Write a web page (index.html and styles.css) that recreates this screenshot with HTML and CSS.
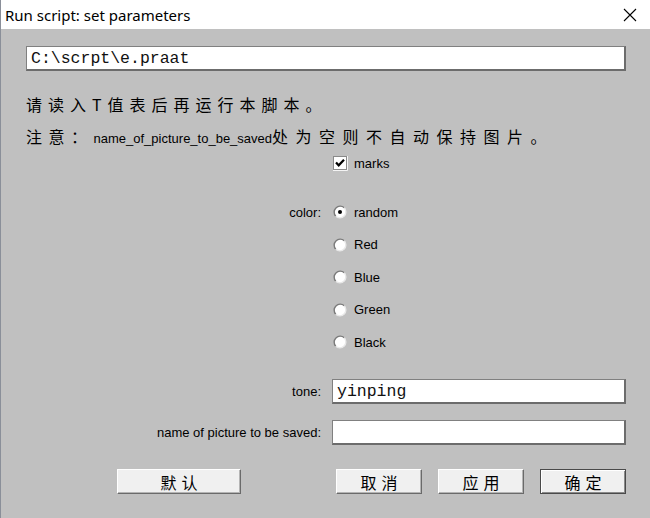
FILE: index.html
```html
<!DOCTYPE html>
<html lang="zh">
<head>
    <meta charset="UTF-8">
    <title>Run script: set parameters</title>
    <link rel="stylesheet" href="styles.css">
</head>
<body>
    <div class="titlebar">
        <span class="title">Run script: set parameters</span>
        <svg class="close" width="14" height="14" viewBox="0 0 14 14">
            <path d="M1 1 L13 13 M13 1 L1 13" stroke="#000" stroke-width="1.1" fill="none"/>
        </svg>
    </div>

    <div class="dialog">
        <input class="field path" type="text" value="C:\scrpt\e.praat">

        <p class="note">请读入T值表后再运行本脚本。</p>
        <p class="note note-wide">注意：<span class="latin">name_of_picture_to_be_saved</span><span class="tail">处为空则不自动保持图片。</span></p>

        <div class="row check-row">
            <span class="label"></span>
            <label class="option">
                <svg width="16" height="16" viewBox="0 0 16 16">
                    <rect x="1.5" y="1.5" width="13" height="13" fill="#fff" stroke="#8a8a8a"/>
                    <path d="M15.5 1 V15.5 H1" stroke="#f4f4f4" fill="none"/>
                    <path d="M4 7.5 L6.7 10.3 L12 4.8" stroke="#000" stroke-width="2.2" fill="none"/>
                </svg>
                marks
            </label>
        </div>

        <div class="radios">
            <div class="row radio-row">
                <span class="label">color:</span>
                <label class="option">
                    <svg width="16" height="16" viewBox="0 0 16 16">
                        <circle cx="8" cy="8" r="6" fill="#fff"/>
                        <path d="M3.76 12.24 A6 6 0 0 1 12.24 3.76" stroke="#7a7a7a" stroke-width="1.4" fill="none"/>
                        <path d="M12.24 3.76 A6 6 0 0 1 3.76 12.24" stroke="#e8e8e8" stroke-width="1.4" fill="none"/>
                        <circle cx="8" cy="8" r="2" fill="#000"/>
                    </svg>
                    random
                </label>
            </div>
            <div class="row radio-row">
                <span class="label"></span>
                <label class="option">
                    <svg width="16" height="16" viewBox="0 0 16 16">
                        <circle cx="8" cy="8" r="6" fill="#fff"/>
                        <path d="M3.76 12.24 A6 6 0 0 1 12.24 3.76" stroke="#7a7a7a" stroke-width="1.4" fill="none"/>
                        <path d="M12.24 3.76 A6 6 0 0 1 3.76 12.24" stroke="#e8e8e8" stroke-width="1.4" fill="none"/>
                    </svg>
                    Red
                </label>
            </div>
            <div class="row radio-row">
                <span class="label"></span>
                <label class="option">
                    <svg width="16" height="16" viewBox="0 0 16 16">
                        <circle cx="8" cy="8" r="6" fill="#fff"/>
                        <path d="M3.76 12.24 A6 6 0 0 1 12.24 3.76" stroke="#7a7a7a" stroke-width="1.4" fill="none"/>
                        <path d="M12.24 3.76 A6 6 0 0 1 3.76 12.24" stroke="#e8e8e8" stroke-width="1.4" fill="none"/>
                    </svg>
                    Blue
                </label>
            </div>
            <div class="row radio-row">
                <span class="label"></span>
                <label class="option">
                    <svg width="16" height="16" viewBox="0 0 16 16">
                        <circle cx="8" cy="8" r="6" fill="#fff"/>
                        <path d="M3.76 12.24 A6 6 0 0 1 12.24 3.76" stroke="#7a7a7a" stroke-width="1.4" fill="none"/>
                        <path d="M12.24 3.76 A6 6 0 0 1 3.76 12.24" stroke="#e8e8e8" stroke-width="1.4" fill="none"/>
                    </svg>
                    Green
                </label>
            </div>
            <div class="row radio-row">
                <span class="label"></span>
                <label class="option">
                    <svg width="16" height="16" viewBox="0 0 16 16">
                        <circle cx="8" cy="8" r="6" fill="#fff"/>
                        <path d="M3.76 12.24 A6 6 0 0 1 12.24 3.76" stroke="#7a7a7a" stroke-width="1.4" fill="none"/>
                        <path d="M12.24 3.76 A6 6 0 0 1 3.76 12.24" stroke="#e8e8e8" stroke-width="1.4" fill="none"/>
                    </svg>
                    Black
                </label>
            </div>
        </div>

        <div class="row text-row tone-row">
            <span class="label">tone:</span>
            <input class="field" type="text" value="yinping">
        </div>
        <div class="row text-row name-row">
            <span class="label">name of picture to be saved:</span>
            <input class="field" type="text" value="">
        </div>

        <div class="buttons">
            <button class="btn wide">默认</button>
            <button class="btn push">取消</button>
            <button class="btn">应用</button>
            <button class="btn default">确定</button>
        </div>
    </div>
</body>
</html>
```

FILE: styles.css
```css
html, body {
    margin: 0;
    height: 100%;
}
body {
    background: #c0c0c0;
    font-family: 'Liberation Sans', Arial, sans-serif;
    font-size: 13px;
    color: #000;
    border-left: 1px solid #8a8f99;
    box-sizing: border-box;
}
.titlebar {
    height: 29px;
    background: #fff;
    display: flex;
    align-items: center;
    padding: 0 13px 0 4px;
}
.title {
    font-family: 'Noto Sans', 'Liberation Sans', sans-serif;
    font-size: 15px;
    flex: 1;
}
.close {
    display: block;
}
.dialog {
    padding: 17px 24px 0 25px;
}
.field {
    display: block;
    box-sizing: border-box;
    width: 100%;
    height: 25px;
    margin: 0;
    padding: 0 4px;
    background: #fff;
    border: 1px solid #808080;
    border-right: 2px solid #6c6c6c;
    border-bottom: 2px solid #6c6c6c;
    font-family: 'Liberation Mono', 'Courier New', monospace;
    font-size: 16.5px;
    color: #111;
    outline: none;
}
.note {
    margin: 0;
    height: 32px;
    line-height: 32px;
    font-family: 'Noto Sans CJK SC', sans-serif;
    font-size: 16px;
    letter-spacing: 6px;
    white-space: nowrap;
}
.note-wide {
    letter-spacing: 6.5px;
}
.path + .note {
    margin-top: 17px;
}
.latin {
    font-family: 'Liberation Sans', Arial, sans-serif;
    font-size: 13px;
    letter-spacing: 0;
}
.tail {
    letter-spacing: 7.5px;
}
.row {
    display: grid;
    grid-template-columns: 295px 1fr;
    column-gap: 11px;
    align-items: center;
}
.label {
    text-align: right;
}
.option {
    display: flex;
    align-items: center;
    gap: 6px;
}
.option svg {
    display: block;
}
.check-row {
    height: 22px;
    margin-bottom: 22px;
}
.radio-row {
    height: 32.5px;
}
.text-row {
    height: 25px;
}
.tone-row {
    margin-top: 20.5px;
}
.name-row {
    margin-top: 16px;
}
.buttons {
    display: flex;
    gap: 16px;
    margin-top: 24px;
    padding-left: 91px;
}
.btn {
    box-sizing: border-box;
    width: 86px;
    height: 25px;
    padding: 0 0 0 5px;
    background: #f0f0f0;
    border: 1px solid;
    border-color: #fff #6a6a6a #6a6a6a #fff;
    box-shadow: inset -1px -1px 0 #b4b4b4;
    font-family: 'Noto Sans CJK SC', sans-serif;
    font-size: 16px;
    letter-spacing: 5px;
    color: #000;
}
.btn.wide {
    width: 124px;
}
.btn.push {
    margin-left: auto;
}
.btn.default {
    border: 1px solid #4a4a4a;
    box-shadow: inset 1px 1px 0 #fff, inset -1px -1px 0 #8a8a8a;
}
```
